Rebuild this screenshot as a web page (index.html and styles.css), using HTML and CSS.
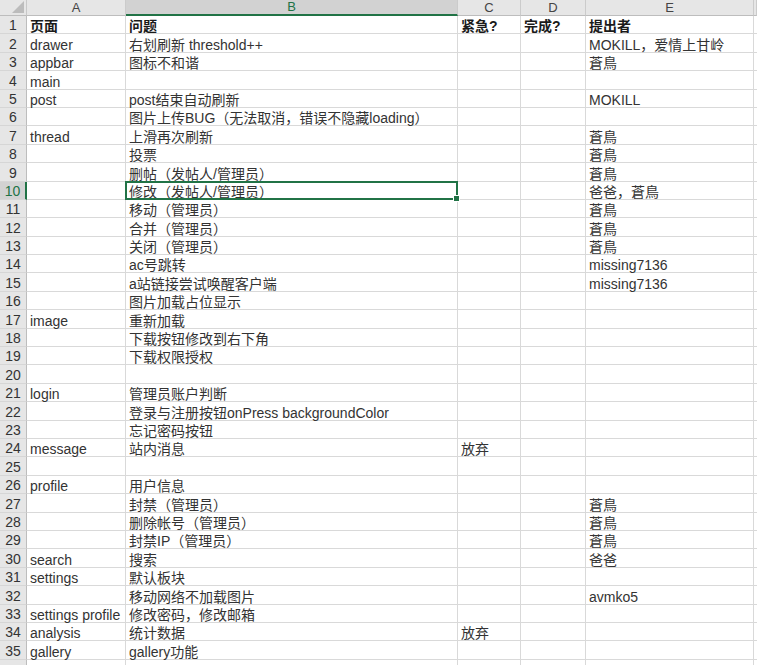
FILE: index.html
```html
<!DOCTYPE html>
<html lang="zh">
<head>
<meta charset="utf-8">
<title>Sheet</title>
<link rel="stylesheet" href="styles.css">
</head>
<body>
<div class="sheet">
  <div class="row hrow">
    <div class="corner"><svg width="12" height="12" viewBox="0 0 12 12"><polygon points="12,0 12,12 0,12" fill="#bcbcbc"/></svg></div>
    <div class="ch">A</div><div class="ch sel">B</div><div class="ch">C</div><div class="ch">D</div><div class="ch">E</div><div class="ch"></div>
  </div>
  <div class="row"><div class="rh">1</div><div class="c b">页面</div><div class="c b">问题</div><div class="c b">紧急?</div><div class="c b">完成?</div><div class="c b">提出者</div><div class="c"></div></div>
  <div class="row"><div class="rh">2</div><div class="c">drawer</div><div class="c">右划刷新 threshold++</div><div class="c"></div><div class="c"></div><div class="c">MOKILL，爱情上甘岭</div><div class="c"></div></div>
  <div class="row"><div class="rh">3</div><div class="c">appbar</div><div class="c">图标不和谐</div><div class="c"></div><div class="c"></div><div class="c">蒼鳥</div><div class="c"></div></div>
  <div class="row"><div class="rh">4</div><div class="c">main</div><div class="c"></div><div class="c"></div><div class="c"></div><div class="c"></div><div class="c"></div></div>
  <div class="row"><div class="rh">5</div><div class="c">post</div><div class="c">post结束自动刷新</div><div class="c"></div><div class="c"></div><div class="c">MOKILL</div><div class="c"></div></div>
  <div class="row"><div class="rh">6</div><div class="c"></div><div class="c">图片上传BUG（无法取消，错误不隐藏loading）</div><div class="c"></div><div class="c"></div><div class="c"></div><div class="c"></div></div>
  <div class="row"><div class="rh">7</div><div class="c">thread</div><div class="c">上滑再次刷新</div><div class="c"></div><div class="c"></div><div class="c">蒼鳥</div><div class="c"></div></div>
  <div class="row"><div class="rh">8</div><div class="c"></div><div class="c">投票</div><div class="c"></div><div class="c"></div><div class="c">蒼鳥</div><div class="c"></div></div>
  <div class="row"><div class="rh">9</div><div class="c"></div><div class="c">删帖（发帖人/管理员）</div><div class="c"></div><div class="c"></div><div class="c">蒼鳥</div><div class="c"></div></div>
  <div class="row"><div class="rh sel">10</div><div class="c"></div><div class="c active">修改（发帖人/管理员）</div><div class="c"></div><div class="c"></div><div class="c">爸爸，蒼鳥</div><div class="c"></div></div>
  <div class="row"><div class="rh">11</div><div class="c"></div><div class="c">移动（管理员）</div><div class="c"></div><div class="c"></div><div class="c">蒼鳥</div><div class="c"></div></div>
  <div class="row"><div class="rh">12</div><div class="c"></div><div class="c">合并（管理员）</div><div class="c"></div><div class="c"></div><div class="c">蒼鳥</div><div class="c"></div></div>
  <div class="row"><div class="rh">13</div><div class="c"></div><div class="c">关闭（管理员）</div><div class="c"></div><div class="c"></div><div class="c">蒼鳥</div><div class="c"></div></div>
  <div class="row"><div class="rh">14</div><div class="c"></div><div class="c">ac号跳转</div><div class="c"></div><div class="c"></div><div class="c">missing7136</div><div class="c"></div></div>
  <div class="row"><div class="rh">15</div><div class="c"></div><div class="c">a站链接尝试唤醒客户端</div><div class="c"></div><div class="c"></div><div class="c">missing7136</div><div class="c"></div></div>
  <div class="row"><div class="rh">16</div><div class="c"></div><div class="c">图片加载占位显示</div><div class="c"></div><div class="c"></div><div class="c"></div><div class="c"></div></div>
  <div class="row"><div class="rh">17</div><div class="c">image</div><div class="c">重新加载</div><div class="c"></div><div class="c"></div><div class="c"></div><div class="c"></div></div>
  <div class="row"><div class="rh">18</div><div class="c"></div><div class="c">下载按钮修改到右下角</div><div class="c"></div><div class="c"></div><div class="c"></div><div class="c"></div></div>
  <div class="row"><div class="rh">19</div><div class="c"></div><div class="c">下载权限授权</div><div class="c"></div><div class="c"></div><div class="c"></div><div class="c"></div></div>
  <div class="row"><div class="rh">20</div><div class="c"></div><div class="c"></div><div class="c"></div><div class="c"></div><div class="c"></div><div class="c"></div></div>
  <div class="row"><div class="rh">21</div><div class="c">login</div><div class="c">管理员账户判断</div><div class="c"></div><div class="c"></div><div class="c"></div><div class="c"></div></div>
  <div class="row"><div class="rh">22</div><div class="c"></div><div class="c">登录与注册按钮onPress backgroundColor</div><div class="c"></div><div class="c"></div><div class="c"></div><div class="c"></div></div>
  <div class="row"><div class="rh">23</div><div class="c"></div><div class="c">忘记密码按钮</div><div class="c"></div><div class="c"></div><div class="c"></div><div class="c"></div></div>
  <div class="row"><div class="rh">24</div><div class="c">message</div><div class="c">站内消息</div><div class="c">放弃</div><div class="c"></div><div class="c"></div><div class="c"></div></div>
  <div class="row"><div class="rh">25</div><div class="c"></div><div class="c"></div><div class="c"></div><div class="c"></div><div class="c"></div><div class="c"></div></div>
  <div class="row"><div class="rh">26</div><div class="c">profile</div><div class="c">用户信息</div><div class="c"></div><div class="c"></div><div class="c"></div><div class="c"></div></div>
  <div class="row"><div class="rh">27</div><div class="c"></div><div class="c">封禁（管理员）</div><div class="c"></div><div class="c"></div><div class="c">蒼鳥</div><div class="c"></div></div>
  <div class="row"><div class="rh">28</div><div class="c"></div><div class="c">删除帐号（管理员）</div><div class="c"></div><div class="c"></div><div class="c">蒼鳥</div><div class="c"></div></div>
  <div class="row"><div class="rh">29</div><div class="c"></div><div class="c">封禁IP（管理员）</div><div class="c"></div><div class="c"></div><div class="c">蒼鳥</div><div class="c"></div></div>
  <div class="row"><div class="rh">30</div><div class="c">search</div><div class="c">搜索</div><div class="c"></div><div class="c"></div><div class="c">爸爸</div><div class="c"></div></div>
  <div class="row"><div class="rh">31</div><div class="c">settings</div><div class="c">默认板块</div><div class="c"></div><div class="c"></div><div class="c"></div><div class="c"></div></div>
  <div class="row"><div class="rh">32</div><div class="c"></div><div class="c">移动网络不加载图片</div><div class="c"></div><div class="c"></div><div class="c">avmko5</div><div class="c"></div></div>
  <div class="row"><div class="rh">33</div><div class="c">settings profile</div><div class="c">修改密码，修改邮箱</div><div class="c"></div><div class="c"></div><div class="c"></div><div class="c"></div></div>
  <div class="row"><div class="rh">34</div><div class="c">analysis</div><div class="c">统计数据</div><div class="c">放弃</div><div class="c"></div><div class="c"></div><div class="c"></div></div>
  <div class="row"><div class="rh">35</div><div class="c">gallery</div><div class="c">gallery功能</div><div class="c"></div><div class="c"></div><div class="c"></div><div class="c"></div></div>
  <div class="row"><div class="rh"></div><div class="c"></div><div class="c"></div><div class="c"></div><div class="c"></div><div class="c"></div><div class="c"></div></div>
</div>
</body>
</html>
```
FILE: styles.css
```css
html, body {
  margin: 0;
  padding: 0;
  background: #fff;
  overflow: hidden;
}
body {
  font-family: "Liberation Sans", "Noto Sans CJK SC", sans-serif;
  font-size: 14px;
  color: #333;
}
.sheet {
  width: 757px;
}
.row {
  display: grid;
  grid-template-columns: 27px 99px 332px 63px 65px 168px 1fr;
  height: 18.4px;
}
.hrow {
  height: 16px;
}
.corner {
  background: #e6e6e6;
  border-right: 1px solid #c8c8c8;
  border-bottom: 1px solid #bdbdbd;
  display: flex;
  align-items: flex-end;
  justify-content: flex-end;
  padding: 0 2px 2px 0;
  box-sizing: border-box;
}
.corner svg {
  display: block;
}
.ch {
  background: #e6e6e6;
  border-right: 1px solid #cbcbcb;
  border-bottom: 1px solid #bdbdbd;
  box-sizing: border-box;
  text-align: center;
  font-size: 13px;
  line-height: 15px;
  color: #444;
}
.ch.sel {
  background: #d2d2d2;
  color: #217346;
  border-bottom: 2px solid #217346;
  line-height: 14px;
}
.rh {
  background: #e6e6e6;
  border-right: 1px solid #bdbdbd;
  border-bottom: 1px solid #d6d6d6;
  box-sizing: border-box;
  text-align: center;
  font-size: 14px;
  line-height: 15px;
  color: #333;
  display: flex;
  align-items: flex-end;
  justify-content: center;
}
.rh.sel {
  background: #d2d2d2;
  color: #217346;
  border-right: 2px solid #217346;
}
.c {
  border-right: 1px solid #d9d9d9;
  border-bottom: 1px solid #d9d9d9;
  box-sizing: border-box;
  padding: 0 3px 0 3px;
  white-space: nowrap;
  line-height: 14px;
  display: flex;
  align-items: flex-end;
  position: relative;
}
.c.b {
  font-weight: bold;
  color: #1a1a1a;
}
.c.active::after {
  content: "";
  position: absolute;
  left: -1px;
  top: -1px;
  right: -1px;
  bottom: -1px;
  border: 2px solid #217346;
  box-sizing: border-box;
}
.c.active::before {
  content: "";
  position: absolute;
  right: -3px;
  bottom: -3px;
  width: 5px;
  height: 5px;
  background: #217346;
  border: 1px solid #fff;
  z-index: 2;
}
```
